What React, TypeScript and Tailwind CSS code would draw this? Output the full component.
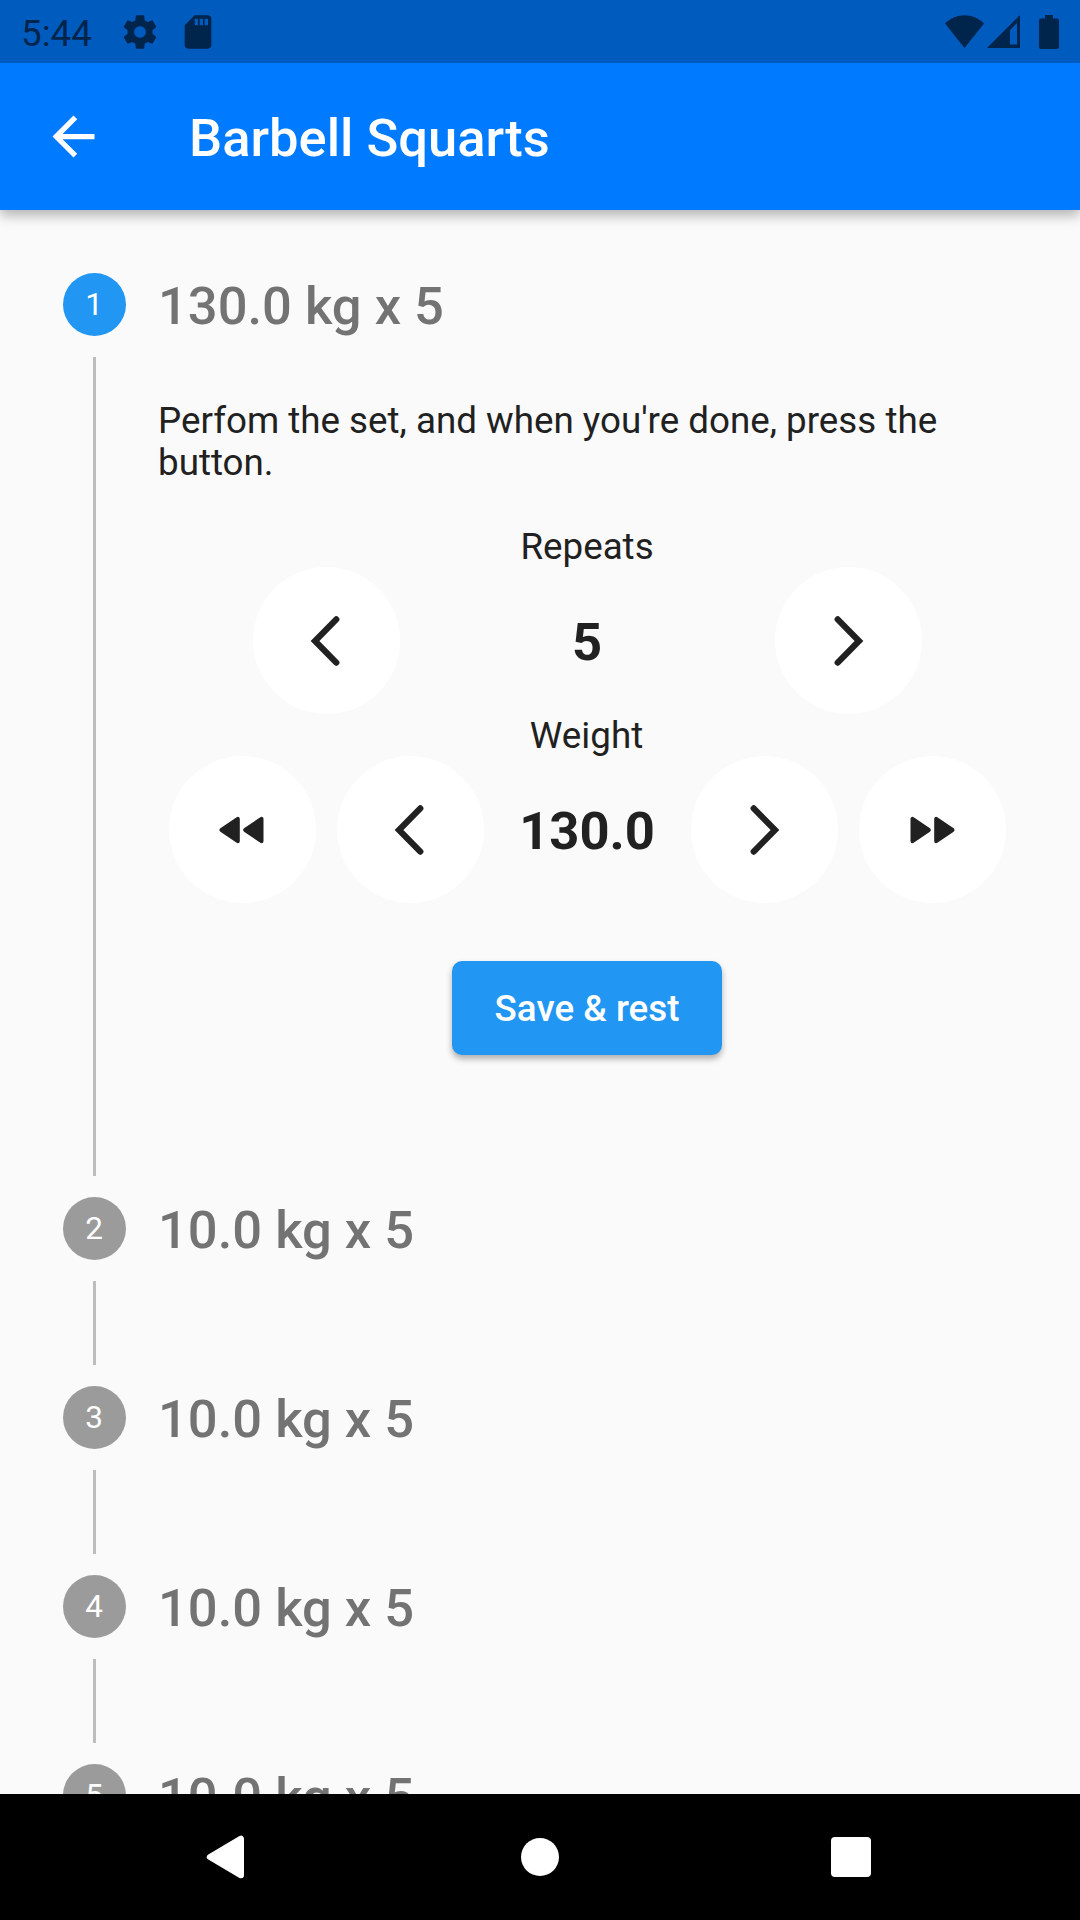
import React from "react";

function StatusBar() {
  return (
    <div className="relative z-20 flex h-[63px] shrink-0 items-center bg-[#005bbf] text-[#00254c]">
      <span className="ml-[21px] mt-[5px] w-[73px] text-[36.750px] leading-none">5:44</span>
      <svg className="ml-[26px] size-[40px]" viewBox="0 0 24 24" fill="currentColor">
        <path d="M19.43 12.98c.04-.32.07-.64.07-.98s-.03-.66-.07-.98l2.11-1.65c.19-.15.24-.42.12-.64l-2-3.46c-.12-.22-.39-.3-.61-.22l-2.49 1c-.52-.4-1.08-.73-1.69-.98l-.38-2.65C14.46 2.18 14.25 2 14 2h-4c-.25 0-.46.18-.49.42l-.38 2.65c-.61.25-1.17.59-1.69.98l-2.49-1c-.23-.09-.49 0-.61.22l-2 3.46c-.13.22-.07.49.12.64l2.11 1.65c-.04.32-.07.65-.07.98s.03.66.07.98l-2.11 1.65c-.19.15-.24.42-.12.64l2 3.46c.12.22.39.3.61.22l2.49-1c.52.4 1.08.73 1.69.98l.38 2.65c.03.24.24.42.49.42h4c.25 0 .46-.18.49-.42l.38-2.65c.61-.25 1.17-.59 1.69-.98l2.49 1c.23.09.49 0 .61-.22l2-3.46c.12-.22.07-.49-.12-.64l-2.11-1.65zM12 15.5c-1.93 0-3.5-1.57-3.5-3.5s1.57-3.5 3.5-3.5 3.5 1.57 3.5 3.5-1.57 3.5-3.5 3.5z" />
      </svg>
      <svg className="ml-[18px] size-[40px]" viewBox="0 0 24 24" fill="currentColor">
        <path d="M18 2h-8L4.02 8 4 20c0 1.1.9 2 2 2h12c1.1 0 2-.9 2-2V4c0-1.1-.9-2-2-2zm-6 6h-2V4h2v4zm3 0h-2V4h2v4zm3 0h-2V4h2v4z" />
      </svg>
      <svg className="ml-auto mr-[20px] h-[36px] w-[116px]" viewBox="944 13 116 36" fill="currentColor">
        <path d="M945 22.5 C956 11.5 973 11.5 984 22.5 L964.5 47 Z" />
        <path fillRule="evenodd" d="M987 47 L1020 14 V47 Z M1010 29 V43.5 H1017 V22 Z" />
        <path d="M1045 14 h8 v3.5 h4 a2 2 0 0 1 2 2 v26.500 a2 2 0 0 1 -2 2 h-16 a2 2 0 0 1 -2 -2 v-26.500 a2 2 0 0 1 2 -2 h4 z" />
      </svg>
    </div>
  );
}

function AppBar() {
  return (
    <header className="relative z-10 flex h-[147px] shrink-0 items-center bg-[#007aff] text-white shadow-[0_5px_12px_rgba(0,0,0,0.3)]">
      <svg className="ml-[42px] size-[63px]" viewBox="0 0 24 24" fill="currentColor">
        <path d="M20 11H7.830l5.590-5.590L12 4l-8 8 8 8 1.410-1.410L7.830 13H20v-2z" />
      </svg>
      <h1 className="ml-[84px] pt-[3px] text-[52.500px] font-medium leading-[63px]">Barbell Squarts</h1>
    </header>
  );
}

type IconName = "prev" | "next" | "rewind" | "forward";

const iconClass: Record<IconName, string> = {
  prev: "size-[60px]",
  next: "size-[60px] -scale-x-100",
  rewind: "size-[60px]",
  forward: "size-[60px] -scale-x-100",
};

function RoundButton({ icon }: { icon: IconName }) {
  return (
    <button className="flex size-[147px] shrink-0 items-center justify-center rounded-full bg-white text-[#212121]">
      <svg className={iconClass[icon]} viewBox="-30 -30 60 60">
        {icon === "prev" || icon === "next" ? (
          <path d="M10.300 -21.600 L-11 0 L10.300 21.600" fill="none" stroke="currentColor" strokeWidth="6.200" strokeLinecap="round" />
        ) : (
          <path
            d="M-20.500 0 L-4.200 -11.200 V11.200 Z M3.200 0 L19.500 -11.200 V11.200 Z"
            fill="currentColor"
            stroke="currentColor"
            strokeWidth="4"
            strokeLinejoin="round"
          />
        )}
      </svg>
    </button>
  );
}

function StepRow({ n, label, active, children }: { n: number; label: string; active?: boolean; children?: React.ReactNode }) {
  return (
    <section className="flex shrink-0 gap-[32px]">
      <div className="flex w-[63px] shrink-0 flex-col items-center">
        <div
          className={
            "flex size-[63px] shrink-0 items-center justify-center rounded-full pr-px text-[31.500px] text-white " +
            (active ? "bg-[#2196f3]" : "bg-[#9b9b9b]")
          }
        >
          {n}
        </div>
        <div className="my-[21px] min-h-[84px] w-[3px] grow bg-[#bdbdbd]" />
      </div>
      <div className="flex w-[858px] flex-col">
        <h2 className="h-[63px] text-[52.500px] font-medium leading-[66px] text-[#737373]">{label}</h2>
        {children}
      </div>
    </section>
  );
}

function SetEditor() {
  return (
    <div className="flex flex-col items-center pb-[142px] pt-[64px] text-[36.750px] leading-[42px] text-[#212121]">
      <p className="w-full">Perfom the set, and when you're done, press the button.</p>
      <div className="mt-[42px]">Repeats</div>
      <div className="-mt-px flex w-[669px] items-center justify-between">
        <RoundButton icon="prev" />
        <span className="pt-[3px] text-[52.500px] font-bold">5</span>
        <RoundButton icon="next" />
      </div>
      <div className="pr-px pt-px">Weight</div>
      <div className="-mt-px flex w-[837px] items-center justify-between">
        <div className="flex gap-[21px]">
          <RoundButton icon="rewind" />
          <RoundButton icon="prev" />
        </div>
        <span className="pt-[3px] text-[52.500px] font-bold">130.0</span>
        <div className="flex gap-[21px]">
          <RoundButton icon="next" />
          <RoundButton icon="forward" />
        </div>
      </div>
      <button className="mt-[58px] h-[94px] w-[270px] rounded-[10px] bg-[#2196f3] pt-[2px] font-medium text-white shadow-[0_4px_6px_rgba(0,0,0,0.3)]">
        Save &amp; rest
      </button>
    </div>
  );
}

function NavBar() {
  return (
    <nav className="relative z-10 flex h-[126px] shrink-0 items-center bg-black text-white">
      <svg className="ml-[204px] size-[42px]" viewBox="204 1836 42 42" overflow="visible" fill="currentColor" stroke="currentColor" strokeWidth="6" strokeLinejoin="round">
        <path d="M209.800 1857 L241 1838.700 V1875.300 Z" />
      </svg>
      <div className="ml-[274.500px] size-[38.500px] rounded-full bg-white" />
      <div className="ml-[272px] size-[40px] rounded-[4px] bg-white" />
    </nav>
  );
}

export default function App() {
  return (
    <div className="flex h-[1920px] w-[1080px] flex-col overflow-hidden bg-[#fafafa] font-['Roboto',sans-serif]">
      <StatusBar />
      <AppBar />
      <main className="flex min-h-0 grow flex-col overflow-hidden px-[63px] pt-[63px]">
        <StepRow n={1} label="130.0 kg x 5" active>
          <SetEditor />
        </StepRow>
        {[2, 3, 4, 5].map((n) => (
          <StepRow key={n} n={n} label="10.0 kg x 5" />
        ))}
      </main>
      <NavBar />
    </div>
  );
}
